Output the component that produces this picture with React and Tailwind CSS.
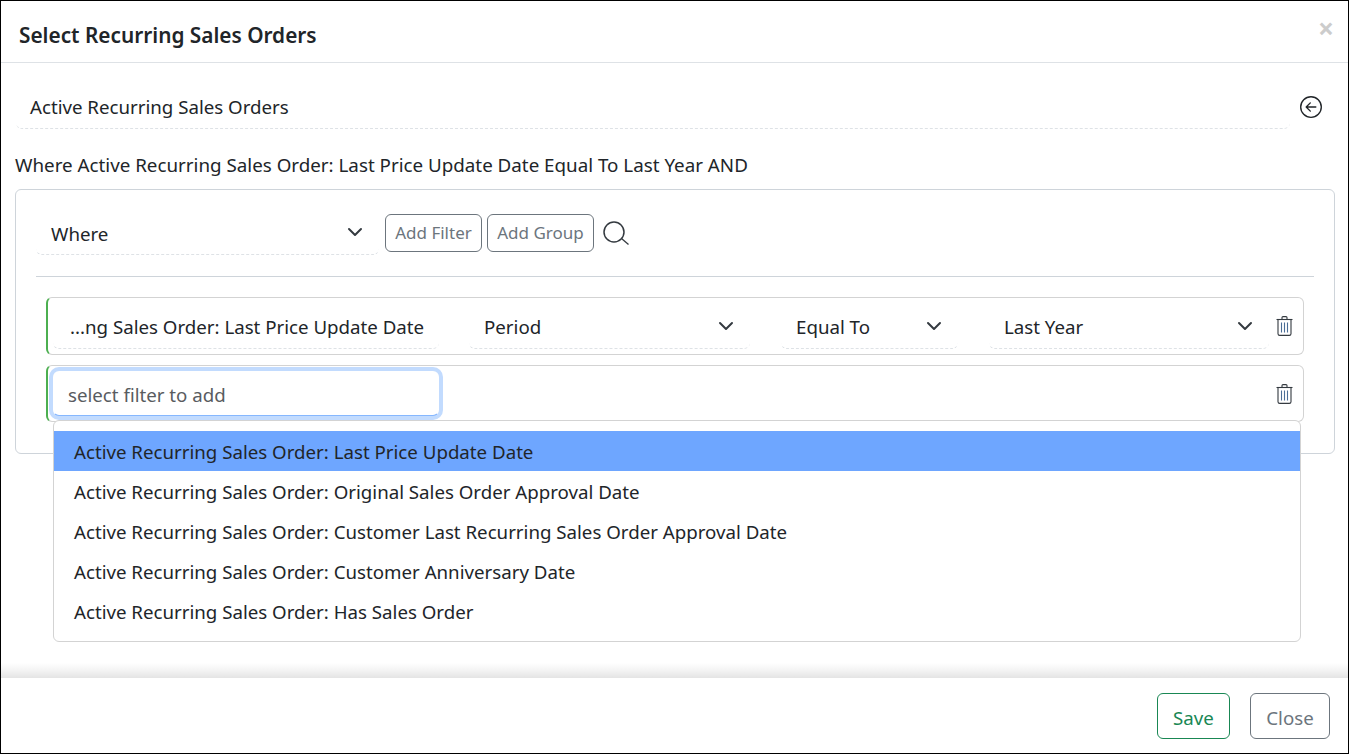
import { BsArrowLeftCircle } from 'react-icons/bs'

const Chevron = () => (
  <svg viewBox="0 0 16 16" className="w-4 h-4 shrink-0" fill="none" stroke="#343a40" strokeWidth="2" strokeLinecap="round" strokeLinejoin="round">
    <path d="m2 5 6 6 6-6" />
  </svg>
)

const Trash = () => (
  <svg viewBox="0 0 17 20" className="w-[17px] h-[20px] shrink-0" fill="none" stroke="#343a40" strokeWidth="1.1">
    <path d="M0.5 3.5h16" />
    <path d="M6 3.5V1.6c0-.6.4-1 1-1h3c.6 0 1 .4 1 1v1.9" />
    <path d="M2 3.5v14.2c0 1 .7 1.7 1.7 1.7h9.6c1 0 1.7-.7 1.7-1.7V3.5" />
    <path d="M5.5 6.5v10M8.5 6.5v10M11.5 6.5v10" stroke="#4a6d96" />
  </svg>
)

const SearchIcon = () => (
  <svg viewBox="0 0 26 24" className="ml-[9px] w-[26px] h-[24px] shrink-0" fill="none" stroke="#343a40">
    <circle cx="11" cy="11" r="10" strokeWidth="1.5" />
    <path d="M18.5 17.5l7 6" strokeWidth="1.3" />
  </svg>
)

const SelectBox = ({ label, className }) => (
  <div className={`flex items-center justify-between h-[45px] pl-[15px] pr-4 border-b border-dashed border-[#dee2e6] rounded-b-md shrink-0 ${className}`}>
    <span className="pt-1">{label}</span>
    <Chevron />
  </div>
)

const options = [
  'Active Recurring Sales Order: Last Price Update Date',
  'Active Recurring Sales Order: Original Sales Order Approval Date',
  'Active Recurring Sales Order: Customer Last Recurring Sales Order Approval Date',
  'Active Recurring Sales Order: Customer Anniversary Date',
  'Active Recurring Sales Order: Has Sales Order',
]

const App = () => {
  return (
    <div className="w-full h-[754px] flex flex-col border border-black bg-white text-[18.7px] text-[#212529] font-['Noto_Sans','Open_Sans',sans-serif] overflow-hidden">
      <div className="h-[62px] shrink-0 flex items-center justify-between pl-[18px] pr-[14px] border-b border-[#dee2e6]">
        <h2 className="text-[20.8px] font-semibold leading-none pt-2">Select Recurring Sales Orders</h2>
        <span className="text-[28px] font-bold leading-none text-[#cccccc] -mt-2">×</span>
      </div>

      <div className="flex-1 relative pl-[14px] pr-[13px]">
        <div className="flex items-center mt-[20px]">
          <div className="flex-1 h-[46px] ml-[1px] pl-[14px] pt-1 flex items-center border-b border-dashed border-[#dee2e6] rounded-b-md">
            Active Recurring Sales Orders
          </div>
          <BsArrowLeftCircle className="w-[22px] h-[22px] ml-[10px] mr-[13px] mt-[2px] text-[#212529]" />
        </div>

        <p className="mt-[24px] h-[25px] leading-[25px] text-[18.8px]">Where Active Recurring Sales Order: Last Price Update Date Equal To Last Year AND</p>

        <div className="mt-[11px] h-[265px] border border-[#ced4da] rounded-md px-5 pt-[20px]">
          <div className="flex items-center pb-[21px] border-b border-[#ced4da]">
            <SelectBox label="Where" className="w-[343px]" />
            <button className="ml-[6px] h-[38px] w-[97px] border border-[#6c757d] rounded-md text-[#6c757d] text-[17px]">Add Filter</button>
            <button className="ml-[5px] h-[38px] w-[107px] border border-[#6c757d] rounded-md text-[#6c757d] text-[17px]">Add Group</button>
            <SearchIcon />
          </div>

          <div className="mx-[10px] mt-[20px] h-[58px] flex items-center border border-[#d3d3d3] border-l-2 border-l-[#4caf50] rounded-md pl-[5px]">
            <div className="w-[386px] h-[45px] pl-[17px] pt-1 flex items-center shrink-0 border-b border-dashed border-[#dee2e6] rounded-b-md overflow-hidden whitespace-nowrap">
              ...ng Sales Order: Last Price Update Date
            </div>
            <SelectBox label="Period" className="w-[281px] ml-[30px]" />
            <SelectBox label="Equal To" className="w-[177px] ml-[31px]" />
            <SelectBox label="Last Year" className="w-[280px] ml-[31px]" />
            <div className="ml-[7px]">
              <Trash />
            </div>
          </div>

          <div className="mx-[10px] mt-[10px] h-[57px] flex items-center justify-between border border-[#d3d3d3] border-l-2 border-l-[#4caf50] rounded-md pl-[5px] pr-[10px]">
            <div className="w-[386px] h-[45px] pl-[14px] pt-1 flex items-center bg-white rounded-md border border-transparent border-b-[#86b7fe] border-b-dashed ring-4 ring-[#c2dbfe] text-[#595c5f]">
              select filter to add
            </div>
            <Trash />
          </div>
        </div>

        <div className="absolute left-[52px] top-[357px] w-[1248px] h-[222px] pt-[10px] bg-white border border-[#d3d3d3] rounded-md">
          {options.map((o, i) => (
            <div key={o} className={`h-[40px] pl-5 pt-[2px] flex items-center ${i === 0 ? 'bg-[#6ea6ff]' : ''}`}>{o}</div>
          ))}
        </div>
      </div>

      <div className="h-[15px] shrink-0 bg-gradient-to-b from-white via-[#f3f3f3] to-[#e4e4e4]" />
      <div className="h-[75px] shrink-0 flex items-start justify-end gap-5 pt-[15px] pr-[18px]">
        <button className="w-[73px] h-[46px] pt-1 border border-[#198754] rounded-md text-[#198754]">Save</button>
        <button className="w-[80px] h-[46px] pt-1 border border-[#6c757d] rounded-md text-[#6c757d]">Close</button>
      </div>
    </div>
  )
}

export default App
